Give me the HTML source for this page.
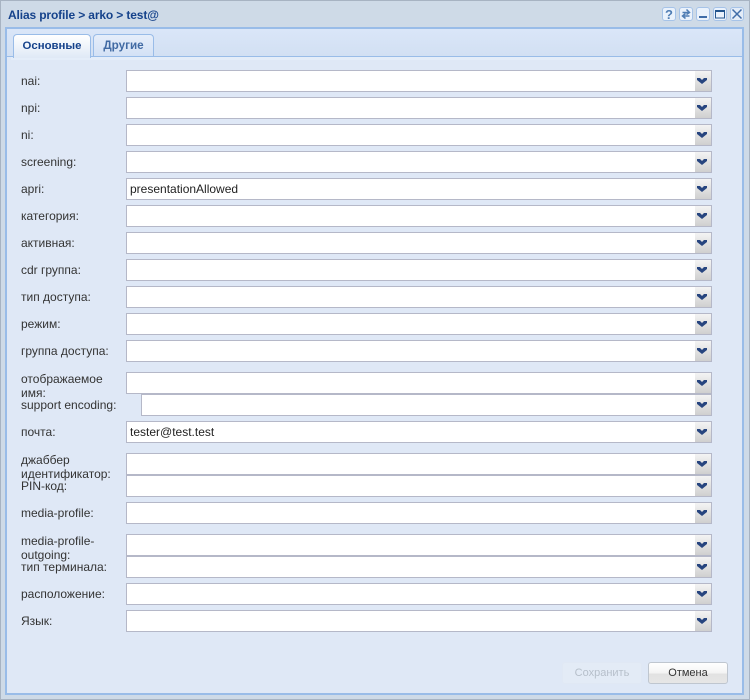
<!DOCTYPE html>
<html><head><meta charset="utf-8"><style>
html,body{margin:0;padding:0}
body{width:750px;height:700px;position:relative;overflow:hidden;background:#cfdbe8;font-family:"Liberation Sans",sans-serif;font-size:12px;color:#333}
.a{position:absolute}
.win{left:0;top:0;width:748px;height:698px;border:1px solid #a7b3c2;background:#cedae7}
.panel{left:5px;top:27px;width:735px;height:664px;border:2px solid #99bce8;background:#dfe8f6}
.strip{left:7px;top:29px;width:735px;height:27px;background:linear-gradient(#dae6f8,#d2e0f3)}
.line{left:7px;top:56px;width:735px;height:1px;background:#99bce8}
.line2{left:11px;top:57px;width:729px;height:3px;background:#e4edf9}
.tab{box-sizing:border-box;top:34px;height:22px;border:1px solid #99bce8;border-bottom:0;border-radius:4px 4px 0 0;font-weight:bold;text-align:center;line-height:22px;color:#15428b}
.t1{left:13px;width:78px;height:24px;background:linear-gradient(#fff,#dfe9f6);z-index:2;font-size:11.4px}
.t2{left:93px;width:61px;background:linear-gradient(#e6eefa,#d3e1f5);color:#416aa3;font-size:11.7px}
.l{left:21px;width:100px;line-height:15px}
.m{line-height:14px}
.f{box-sizing:border-box;height:22px;right:38px;background:#fff;border:1px solid #b5b8c8;border-right:0;padding-left:3px;line-height:20px;color:#222}
.f i{position:absolute;right:0;top:-1px;width:17px;height:22px;box-sizing:border-box;background:linear-gradient(#f4f4f4,#cfcfcf);border:1px solid #b5b8c8;border-left:0}
.f svg{position:absolute;left:2px;top:7px}
.btn{box-sizing:border-box;top:662px;height:22px;text-align:center;line-height:21px;border-radius:3px;font-size:11px}
.b{top:7px;width:14px;height:14px;box-sizing:border-box;border:1px solid #a6c3e8;border-radius:3px;background:#eaf2fc}
.b svg{position:absolute;left:0;top:0}
</style></head><body>
<div class="a win"></div>
<div class="a" style="left:8px;top:8px;font-weight:bold;font-size:12px;color:#15428b;line-height:14px;letter-spacing:-.13px">Alias profile &gt; arko &gt; test@</div>

<div class="a b" style="left:662px"><svg width="12" height="12"><text x="6" y="11" text-anchor="middle" font-family="Liberation Sans" font-weight="bold" font-size="13" fill="#4f7db4">?</text></svg></div>
<div class="a b" style="left:679px"><svg width="12" height="12"><path d="M2.5 4.5H8.5M6.5 1.5L9.5 4.5L6.5 6.5M9.5 8H3.5M5.5 5.5L2.5 8L5.5 10.5" fill="none" stroke="#4f7db4" stroke-width="1.5"/></svg></div>
<div class="a b" style="left:696px"><svg width="12" height="12"><path d="M2 9H10" stroke="#3f6ca8" stroke-width="2"/></svg></div>
<div class="a b" style="left:713px"><svg width="12" height="12"><path d="M1.5 2.5H10.5V10H1.5Z" fill="none" stroke="#24568f" stroke-width="1"/><path d="M1.5 3H10.5" stroke="#24568f" stroke-width="2"/></svg></div>
<div class="a b" style="left:730px;top:7px;background:#e3ecf8"><svg width="12" height="12"><path d="M1.5 1.5L10.5 10.5M10.5 1.5L1.5 10.5" stroke="#3f6ca8" stroke-width="1.5"/></svg></div>

<div class="a panel"></div>
<div class="a strip"></div>
<div class="a line"></div>
<div class="a line2"></div>
<div class="a tab t1">Основные</div>
<div class="a tab t2">Другие</div>

<svg width="0" height="0" style="position:absolute"><defs><symbol id="ar" viewBox="0 0 10 6"><path d="M0 0H3L5 2L7 0H10V2L5 6L0 2Z" fill="#27457f"/></symbol></defs></svg>

<div class="a l" style="top:74px">nai:</div><div class="a f" style="left:126px;top:70px"><i><svg width="10" height="6"><use href="#ar"/></svg></i></div>
<div class="a l" style="top:101px">npi:</div><div class="a f" style="left:126px;top:97px"><i><svg width="10" height="6"><use href="#ar"/></svg></i></div>
<div class="a l" style="top:128px">ni:</div><div class="a f" style="left:126px;top:124px"><i><svg width="10" height="6"><use href="#ar"/></svg></i></div>
<div class="a l" style="top:155px">screening:</div><div class="a f" style="left:126px;top:151px"><i><svg width="10" height="6"><use href="#ar"/></svg></i></div>
<div class="a l" style="top:182px">apri:</div><div class="a f" style="left:126px;top:178px">presentationAllowed<i><svg width="10" height="6"><use href="#ar"/></svg></i></div>
<div class="a l" style="top:209px">категория:</div><div class="a f" style="left:126px;top:205px"><i><svg width="10" height="6"><use href="#ar"/></svg></i></div>
<div class="a l" style="top:236px">активная:</div><div class="a f" style="left:126px;top:232px"><i><svg width="10" height="6"><use href="#ar"/></svg></i></div>
<div class="a l" style="top:263px">cdr группа:</div><div class="a f" style="left:126px;top:259px"><i><svg width="10" height="6"><use href="#ar"/></svg></i></div>
<div class="a l" style="top:290px">тип доступа:</div><div class="a f" style="left:126px;top:286px"><i><svg width="10" height="6"><use href="#ar"/></svg></i></div>
<div class="a l" style="top:317px">режим:</div><div class="a f" style="left:126px;top:313px"><i><svg width="10" height="6"><use href="#ar"/></svg></i></div>
<div class="a l" style="top:344px">группа доступа:</div><div class="a f" style="left:126px;top:340px"><i><svg width="10" height="6"><use href="#ar"/></svg></i></div>
<div class="a l m" style="top:372px">отображаемое имя:</div><div class="a f" style="left:126px;top:372px"><i><svg width="10" height="6"><use href="#ar"/></svg></i></div>
<div class="a l" style="top:398px;width:110px">support encoding:</div><div class="a f" style="left:141px;top:394px"><i><svg width="10" height="6"><use href="#ar"/></svg></i></div>
<div class="a l" style="top:425px">почта:</div><div class="a f" style="left:126px;top:421px">tester@test.test<i><svg width="10" height="6"><use href="#ar"/></svg></i></div>
<div class="a l m" style="top:453px">джаббер идентификатор:</div><div class="a f" style="left:126px;top:453px"><i><svg width="10" height="6"><use href="#ar"/></svg></i></div>
<div class="a l" style="top:479px">PIN-код:</div><div class="a f" style="left:126px;top:475px"><i><svg width="10" height="6"><use href="#ar"/></svg></i></div>
<div class="a l" style="top:506px">media-profile:</div><div class="a f" style="left:126px;top:502px"><i><svg width="10" height="6"><use href="#ar"/></svg></i></div>
<div class="a l m" style="top:534px">media-profile-outgoing:</div><div class="a f" style="left:126px;top:534px"><i><svg width="10" height="6"><use href="#ar"/></svg></i></div>
<div class="a l" style="top:560px">тип терминала:</div><div class="a f" style="left:126px;top:556px"><i><svg width="10" height="6"><use href="#ar"/></svg></i></div>
<div class="a l" style="top:587px">расположение:</div><div class="a f" style="left:126px;top:583px"><i><svg width="10" height="6"><use href="#ar"/></svg></i></div>
<div class="a l" style="top:614px">Язык:</div><div class="a f" style="left:126px;top:610px"><i><svg width="10" height="6"><use href="#ar"/></svg></i></div>

<div class="a btn" style="left:562px;width:80px;background:#e3ebf6;border:1px solid #e0e8f4;color:#b6bfca">Сохранить</div>
<div class="a btn" style="left:648px;width:80px;background:linear-gradient(#fff 0%,#f4f4f4 50%,#e2e2e2 55%,#e6e6e6 100%);border:1px solid #bfc6cf;color:#333">Отмена</div>
</body></html>
